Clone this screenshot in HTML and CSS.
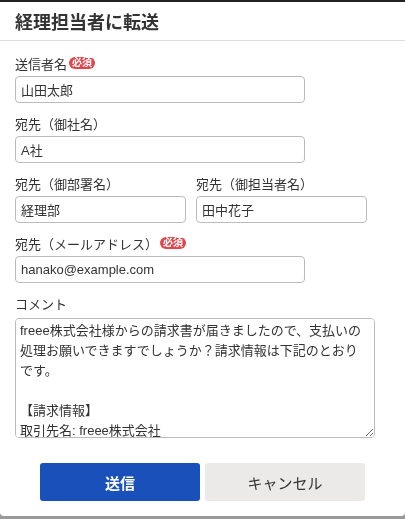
FILE: index.html
```html
<!DOCTYPE html>
<html lang="ja">
<head>
    <meta charset="UTF-8">
    <meta name="viewport" content="width=device-width, initial-scale=1.0">
    <title>経理担当者に転送</title>
    <link rel="stylesheet" href="styles.css">
</head>
<body>
    <div class="modal">
        <div class="modal-header">
            <h2>経理担当者に転送</h2>
        </div>
        <form class="modal-body" onsubmit="return false;">
            <div class="form-group">
                <label for="sender">送信者名<span class="required">必須</span></label>
                <input type="text" id="sender" class="wide" value="山田太郎">
            </div>
            <div class="form-group">
                <label for="company">宛先（御社名）</label>
                <input type="text" id="company" class="wide" value="A社">
            </div>
            <div class="form-row">
                <div class="form-group">
                    <label for="dept">宛先（御部署名）</label>
                    <input type="text" id="dept" class="half" value="経理部">
                </div>
                <div class="form-group">
                    <label for="person">宛先（御担当者名）</label>
                    <input type="text" id="person" class="half" value="田中花子">
                </div>
            </div>
            <div class="form-group">
                <label for="email">宛先（メールアドレス）<span class="required">必須</span></label>
                <input type="text" id="email" class="wide" value="hanako@example.com">
            </div>
            <div class="form-group">
                <label for="comment">コメント</label>
                <textarea id="comment">freee株式会社様からの請求書が届きましたので、支払いの処理お願いできますでしょうか？請求情報は下記のとおりです。

【請求情報】
取引先名: freee株式会社
請求書番号: 0001</textarea>
            </div>
            <div class="buttons">
                <button type="button" class="btn-primary">送信</button>
                <button type="button" class="btn-secondary">キャンセル</button>
            </div>
        </form>
    </div>
</body>
</html>
```

FILE: styles.css
```css
body {
    margin: 0;
    background: #9a9a9a;
    font-family: "Liberation Sans", "Noto Sans CJK JP", sans-serif;
    color: #333;
}
.modal {
    background: #fff;
    border-top: 2px solid #222;
    height: 516px;
    border-radius: 0 0 4px 4px;
    box-sizing: border-box;
}
.modal-header {
    height: 38px;
    border-bottom: 1px solid #ddd;
    padding: 0 15px;
    display: flex;
    align-items: center;
}
.modal-header h2 {
    margin: 0;
    font-size: 18px;
    font-weight: bold;
    color: #333;
}
.modal-body {
    padding: 12px 15px 0;
}
.form-row {
    display: flex;
    gap: 10px;
}
.form-group {
    margin-bottom: 10px;
}
.form-group label {
    display: flex;
    align-items: center;
    height: 20px;
    font-size: 13px;
    margin-bottom: 3px;
}
.required {
    display: inline-block;
    background: #e0474c;
    color: #fff;
    font-size: 10px;
    font-weight: bold;
    line-height: 12px;
    padding: 0 3px;
    border-radius: 6px;
    margin-left: 2px;
}
input {
    display: block;
    height: 27px;
    box-sizing: border-box;
    border: 1px solid #bbb;
    border-radius: 4px;
    padding: 0 5px;
    font-family: inherit;
    font-size: 13px;
    color: #333;
}
input.wide {
    width: 290px;
}
input.half {
    width: 171px;
}
textarea {
    display: block;
    width: 360px;
    height: 120px;
    box-sizing: border-box;
    margin-top: 5px;
    border: 1px solid #bbb;
    border-radius: 4px;
    padding: 2px 4px;
    font-family: inherit;
    font-size: 13px;
    line-height: 20px;
    color: #333;
    resize: both;
}
.buttons {
    display: flex;
    justify-content: center;
    gap: 5px;
    margin: 25px -15px 0;
}
.buttons button {
    width: 160px;
    height: 38px;
    border: none;
    border-radius: 3px;
    font-family: inherit;
    font-size: 15px;
    cursor: pointer;
}
.btn-primary {
    background: #1a50b9;
    color: #fff;
    font-weight: bold;
}
.btn-secondary {
    background: #ece9e9;
    color: #333;
}
```
